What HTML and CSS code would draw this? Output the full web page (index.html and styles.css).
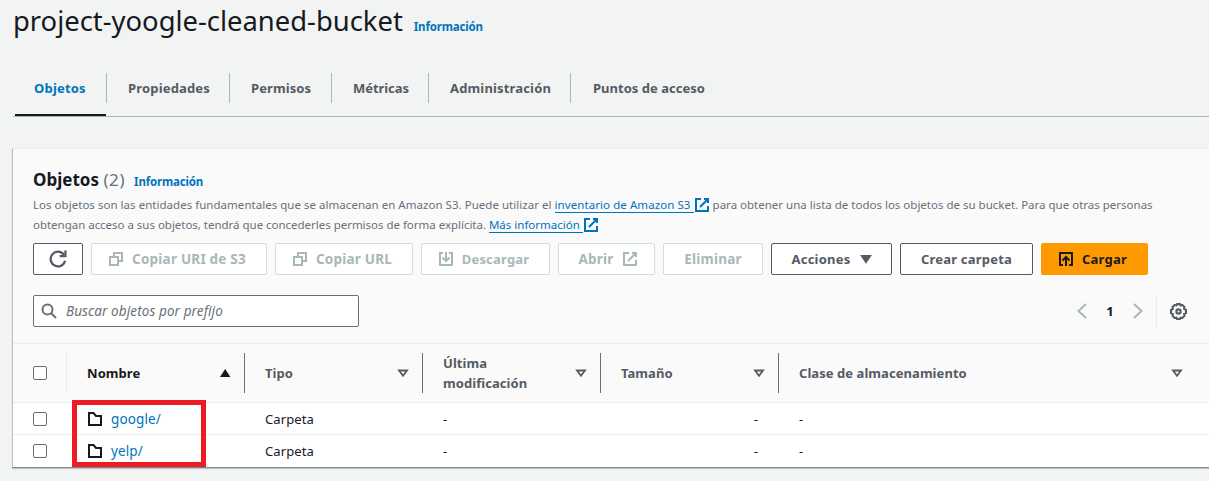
FILE: index.html
```html
<!DOCTYPE html>
<html lang="es">
<head>
<meta charset="utf-8">
<title>project-yoogle-cleaned-bucket</title>
<link rel="stylesheet" href="styles.css">
</head>
<body>
<svg class="defs" aria-hidden="true">
  <symbol id="i-copy" viewBox="0 0 16 16"><path d="M2 6h8v8H2zM6 5.500V2h8v8h-3.500"/></symbol>
  <symbol id="i-external" viewBox="0 0 16 16"><path d="M7 2H2v12h12V9M10 2h4v4M6 10l8-8"/></symbol>
  <symbol id="i-download" viewBox="0 0 16 16"><path d="M5 2H2v12h12V2h-3M8 1v9M4.500 6.500 8 10l3.500-3.500"/></symbol>
  <symbol id="i-upload" viewBox="0 0 16 16"><path d="M5 14H2V2h12v12h-3M8 15V6M4.500 9.500 8 6l3.500 3.500"/></symbol>
  <symbol id="i-folder" viewBox="0 0 16 16"><path d="M2 14V2h4.500L9 5h5v9z"/></symbol>
  <symbol id="i-sort" viewBox="0 0 16 16"><path d="M4 5.500h8L8 10.800z"/></symbol>
</svg>

<header class="title-bar">
  <h1 class="page-title">project-yoogle-cleaned-bucket</h1>
  <a class="info-link">Información</a>
</header>

<nav class="tabs">
  <a class="tab tab-objects active">Objetos</a>
  <a class="tab tab-properties">Propiedades</a>
  <a class="tab tab-permissions">Permisos</a>
  <a class="tab tab-metrics">Métricas</a>
  <a class="tab tab-admin">Administración</a>
  <a class="tab tab-access">Puntos de acceso</a>
</nav>

<section class="panel">
  <div class="panel-head">
    <div class="heading">
      <h2 class="panel-title">Objetos <span class="count">(2)</span></h2>
      <a class="info-link">Información</a>
    </div>
    <p class="description"><span class="intro">Los objetos son las entidades fundamentales que se almacenan en Amazon S3. Puede utilizar el </span><a class="text-link inventory">inventario de Amazon S3 </a><svg class="icon link-icon"><use href="#i-external"/></svg> para obtener una lista de todos los objetos de su bucket. Para que otras personas<br><span class="second">obtengan acceso a sus objetos, tendrá que concederles permisos de forma explícita. </span><a class="text-link">Más información </a><svg class="icon link-icon"><use href="#i-external"/></svg></p>
    <div class="actions">
      <button class="btn btn-refresh"><svg class="icon icon-refresh" viewBox="0 0 16 16"><path d="M14.300 9.500A6.500 6.500 0 1 1 13.200 4.200"/><path d="M14.600 .5v5H9.500"/></svg></button>
      <button class="btn disabled wide-text lead-icon btn-uri"><svg class="icon"><use href="#i-copy"/></svg>Copiar URI de S3</button>
      <button class="btn disabled wide-text lead-icon btn-url"><svg class="icon"><use href="#i-copy"/></svg>Copiar URL</button>
      <button class="btn disabled lead-icon btn-download"><svg class="icon"><use href="#i-download"/></svg>Descargar</button>
      <button class="btn disabled wide-text btn-open">Abrir<svg class="icon"><use href="#i-external"/></svg></button>
      <button class="btn disabled wide-text btn-delete">Eliminar</button>
      <button class="btn btn-actions">Acciones<svg class="icon icon-caret" viewBox="0 0 16 16"><path d="M4 5h8l-4 6z"/></svg></button>
      <button class="btn btn-create">Crear carpeta</button>
      <button class="btn lead-icon primary"><svg class="icon"><use href="#i-upload"/></svg>Cargar</button>
    </div>
    <div class="filter-row">
      <label class="search"><svg class="icon" viewBox="0 0 16 16"><circle cx="6.500" cy="6.500" r="5"/><path d="M10.200 10.200 15 15"/></svg><span>Buscar objetos por prefijo</span></label>
      <div class="pager">
        <svg class="icon chevron" viewBox="0 0 16 16"><path d="M12 1 4.500 8 12 15"/></svg>
        <span class="page-number">1</span>
        <svg class="icon chevron" viewBox="0 0 16 16"><path d="M4 1l7.500 7L4 15"/></svg>
      </div>
      <div class="settings"><svg class="icon gear" viewBox="0 0 16 16"><path d="M6.600 1h2.800l.6 1.200 1.700-.3 1.900 1.900-.3 1.700 1.700 1v3l-1.700 1 .3 1.700-1.900 1.900-1.700-.3-.6 1.200H6.600L6 13.800l-1.700.3-1.900-1.900.3-1.700L1 9.500v-3l1.700-1-.3-1.700 1.900-1.900 1.700.3z"/><circle cx="8" cy="8" r="2"/></svg></div>
    </div>
  </div>

  <div class="grid head">
    <div class="cell check"><span class="checkbox"></span></div>
    <div class="cell sorted"><span>Nombre</span><svg class="icon sort" viewBox="0 0 16 16"><path d="M3 12h10.400L8.200 4z"/></svg></div>
    <div class="cell"><span>Tipo</span><svg class="icon sort"><use href="#i-sort"/></svg></div>
    <div class="cell"><span>Última<br>modificación</span><svg class="icon sort"><use href="#i-sort"/></svg></div>
    <div class="cell"><span>Tamaño</span><svg class="icon sort"><use href="#i-sort"/></svg></div>
    <div class="cell"><span>Clase de almacenamiento</span><svg class="icon sort"><use href="#i-sort"/></svg></div>
  </div>
  <div class="grid row">
    <div class="cell check"><span class="checkbox"></span></div>
    <div class="cell name"><svg class="icon"><use href="#i-folder"/></svg><a>google/</a></div>
    <div class="cell">Carpeta</div>
    <div class="cell">-</div>
    <div class="cell size">-</div>
    <div class="cell">-</div>
  </div>
  <div class="grid row">
    <div class="cell check"><span class="checkbox"></span></div>
    <div class="cell name"><svg class="icon"><use href="#i-folder"/></svg><a>yelp/</a></div>
    <div class="cell">Carpeta</div>
    <div class="cell">-</div>
    <div class="cell size">-</div>
    <div class="cell">-</div>
  </div>
  <div class="highlight"></div>
</section>
</body>
</html>
```

FILE: styles.css
```css
* { box-sizing: border-box; }

body {
  margin: 0;
  height: 481px;
  overflow: hidden;
  background: #f2f3f3;
  color: #16191f;
  font: 13px/20px "Noto Sans", sans-serif;
}

.defs { display: none; }

.icon {
  width: 16px;
  height: 16px;
  flex: none;
  fill: none;
  stroke: currentColor;
  stroke-width: 2;
}

.title-bar {
  display: flex;
  align-items: baseline;
  gap: 11px;
  height: 72px;
  padding: 3px 0 0 13px;
}

.page-title {
  margin: 0;
  font-size: 27.4px;
  font-weight: 400;
  line-height: 36px;
}

.info-link {
  color: #0073bb;
  font-size: 11.5px;
  font-weight: 700;
  letter-spacing: -.17px;
}

.tabs {
  display: flex;
  height: 45px;
  margin-left: 13px;
  padding-left: 1px;
  border-bottom: 1px solid #aab7b8;
}

.tab {
  position: relative;
  height: 32px;
  padding: 6px 0 0 21px;
  color: #545b64;
  font-weight: 700;
  letter-spacing: .1px;
}

.tab::before {
  content: "";
  position: absolute;
  left: -1px;
  top: 1px;
  height: 30px;
  border-left: 1px solid #aab7b8;
}

.tab-objects { width: 93px; padding-left: 20px; letter-spacing: .2px; color: #0073bb; }
.tab-objects::before { display: none; }
.tab.active::after {
  content: "";
  position: absolute;
  left: 1px;
  right: 1px;
  top: 42px;
  height: 2px;
  background: #16191f;
}
.tab-properties { width: 123px; letter-spacing: .17px; }
.tab-permissions { width: 102px; }
.tab-metrics { width: 97px; letter-spacing: -.05px; }
.tab-admin { width: 142px; letter-spacing: .16px; }
.tab-access { padding-left: 22px; letter-spacing: .02px; }

.panel {
  position: relative;
  margin: 31px 0 0 12px;
  height: 320px;
  background: #fff;
  border-top: 1px solid #eaeded;
  border-left: 1px solid #b9c1c2;
  border-bottom: 1px solid #7d8789;
  box-shadow: 0 1px 1px rgba(0, 28, 36, .2);
}

.panel-head {
  height: 194px;
  padding: 20px 0 0 20px;
  background: #fafafa;
}

.heading {
  display: flex;
  align-items: baseline;
  gap: 9px;
  height: 26px;
}

.panel-title {
  margin: 0;
  font-size: 17px;
  line-height: 22px;
}

.count { color: #687078; font-weight: 400; letter-spacing: .6px; }

.description {
  margin: 0;
  color: #687078;
  font-size: 11.5px;
  line-height: 20px;
  white-space: nowrap;
}

.intro { letter-spacing: .03px; }
.second { letter-spacing: -.022px; }

.text-link {
  padding-bottom: 0;
  border-bottom: 1px solid #0073bb;
  color: #0073bb;
  white-space: pre;
}
.inventory { letter-spacing: .077px; }

.link-icon { vertical-align: -4px; color: #0073bb; }

.actions {
  display: flex;
  gap: 8px;
  margin-top: 8px;
}

.btn {
  display: flex;
  align-items: center;
  justify-content: center;
  gap: 8px;
  height: 32px;
  padding: 0;
  border: 1px solid #545b64;
  border-radius: 2px;
  background: #fff;
  color: #545b64;
  font: 700 13px/20px "Noto Sans", sans-serif;
  letter-spacing: .2px;
}
.lead-icon { padding-right: 4px; }
.disabled { border-color: #d5dbdb; color: #aab7b8; }
.wide-text { font-size: 13.5px; letter-spacing: .22px; }
.primary { width: 107px; border-color: #ff9900; background: #ff9900; color: #16191f; }
.btn-refresh { width: 50px; }
.btn-uri { width: 176px; }
.btn-url { width: 138px; }
.btn-download { width: 129px; }
.btn-open { width: 97px; padding-left: 3px; }
.btn-delete { width: 100px; }
.btn-actions { width: 121px; padding-left: 3px; }
.btn-create { width: 133px; }

.icon-refresh { width: 18px; height: 18px; }
.icon-caret { fill: currentColor; }

.filter-row {
  display: flex;
  align-items: center;
  margin-top: 20px;
}

.search {
  display: flex;
  align-items: center;
  gap: 9px;
  width: 326px;
  height: 32px;
  padding-left: 7px;
  border: 1px solid #687078;
  border-radius: 2px;
  background: #fff;
  color: #687078;
  font-size: 13.5px;
  font-style: italic;
  letter-spacing: .1px;
}

.pager {
  display: flex;
  align-items: center;
  gap: 16px;
  margin-left: auto;
  color: #aab7b8;
}
.page-number { width: 8px; color: #16191f; font-weight: 700; text-align: center; }

.settings {
  display: flex;
  align-items: center;
  height: 32px;
  margin: 0 22px 0 10px;
  padding-left: 13px;
  border-left: 1px solid #eaeded;
  color: #545b64;
}
.gear { width: 17px; height: 17px; }

.grid {
  display: grid;
  grid-template-columns: 54px 178px 178px 178px 178px 1fr;
  align-items: center;
}

.head {
  height: 60px;
  border-top: 1px solid #eaeded;
  border-bottom: 1px solid #eaeded;
  background: #fafafa;
  color: #545b64;
  font-weight: 700;
  letter-spacing: .06px;
}
.head .cell {
  display: flex;
  align-items: center;
  justify-content: space-between;
  height: 40px;
  padding: 0 11px 0 20px;
  border-right: 1px solid #687078;
}
.head .check { border-color: #eaeded; }
.head .cell:last-child { padding-right: 24px; border: 0; }
.head .sorted { color: #16191f; }
.sort { stroke-width: 1.8; }
.sorted .sort { fill: currentColor; stroke: none; }

.row { height: 32px; border-bottom: 1px solid #eaeded; }
.row:nth-last-child(2) { border-bottom-color: transparent; }
.row .cell { padding-left: 20px; letter-spacing: .11px; }
.row .name { display: flex; align-items: center; gap: 8px; font-size: 13.5px; letter-spacing: .12px; }
.name a { color: #0073bb; }
.row .size { padding-right: 21px; text-align: right; }

.checkbox {
  display: block;
  width: 14px;
  height: 14px;
  border: 1px solid #687078;
  border-radius: 2px;
  background: #fff;
}

/* Marks the two folders over the table */
.highlight {
  position: absolute;
  left: 59px;
  top: 251px;
  width: 134px;
  height: 67px;
  border: 5px solid #ed1c24;
}
```
